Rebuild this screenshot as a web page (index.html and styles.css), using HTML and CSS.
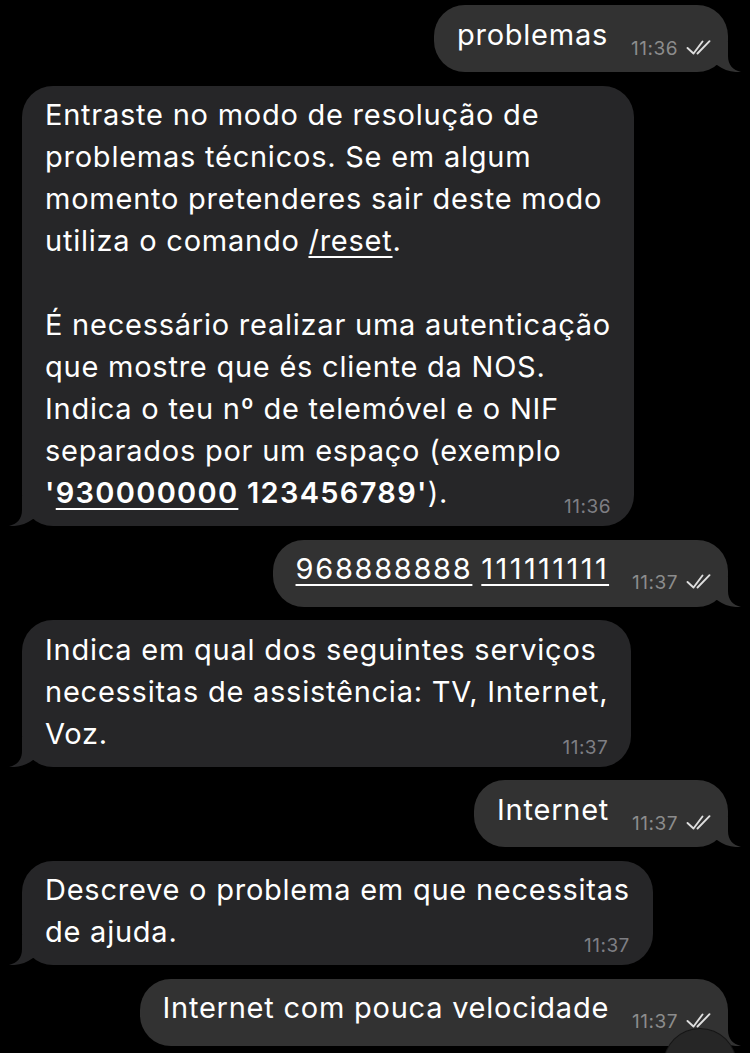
FILE: index.html
```html
<!DOCTYPE html>
<html lang="pt">
<head>
<meta charset="utf-8">
<title>Chat</title>
<link rel="stylesheet" href="styles.css">
</head>
<body>
<main class="chat">
  <div class="msg msg-out">
    <div class="bubble">problemas<span class="meta"><span class="time">11:36</span><svg class="checks" viewBox="0 0 26 15" width="26" height="15"><path d="M1.5 8 L7.5 13.5 L16.5 1.5"/><path d="M11.5 13.5 L23.5 1.2"/></svg></span><svg class="tail" viewBox="0 0 30 30" width="30" height="30"><path d="M14 0 V14 C14 23 9 28 1 30 C9 30.6 18 28.5 25 23 H30 V0 Z"/></svg></div>
  </div>

  <div class="msg msg-in">
    <div class="bubble">Entraste no modo de resolução de<br>problemas técnicos. Se em algum<br>momento pretenderes sair deste modo<br>utiliza o comando <span class="link">/reset</span>.<br><br>É necessário realizar uma autenticação<br>que mostre que és cliente da NOS.<br>Indica o teu nº de telemóvel e o NIF<br>separados por um espaço (exemplo<br><span class="b">'<span class="link">930000000</span> 123456789'</span>).<span class="meta"><span class="time">11:36</span></span><svg class="tail" viewBox="0 0 30 30" width="30" height="30"><path d="M14 0 V14 C14 23 9 28 1 30 C9 30.6 18 28.5 25 23 H30 V0 Z"/></svg></div>
  </div>

  <div class="msg msg-out">
    <div class="bubble"><span class="link num">968888888</span> <span class="link num ones">111111111</span><span class="meta"><span class="time">11:37</span><svg class="checks" viewBox="0 0 26 15" width="26" height="15"><path d="M1.5 8 L7.5 13.5 L16.5 1.5"/><path d="M11.5 13.5 L23.5 1.2"/></svg></span><svg class="tail" viewBox="0 0 30 30" width="30" height="30"><path d="M14 0 V14 C14 23 9 28 1 30 C9 30.6 18 28.5 25 23 H30 V0 Z"/></svg></div>
  </div>

  <div class="msg msg-in">
    <div class="bubble">Indica em qual dos seguintes serviços<br>necessitas de assistência: TV, Internet,<br>Voz.<span class="meta"><span class="time">11:37</span></span><svg class="tail" viewBox="0 0 30 30" width="30" height="30"><path d="M14 0 V14 C14 23 9 28 1 30 C9 30.6 18 28.5 25 23 H30 V0 Z"/></svg></div>
  </div>

  <div class="msg msg-out">
    <div class="bubble">Internet<span class="meta"><span class="time">11:37</span><svg class="checks" viewBox="0 0 26 15" width="26" height="15"><path d="M1.5 8 L7.5 13.5 L16.5 1.5"/><path d="M11.5 13.5 L23.5 1.2"/></svg></span><svg class="tail" viewBox="0 0 30 30" width="30" height="30"><path d="M14 0 V14 C14 23 9 28 1 30 C9 30.6 18 28.5 25 23 H30 V0 Z"/></svg></div>
  </div>

  <div class="msg msg-in">
    <div class="bubble">Descreve o problema em que necessitas<br>de ajuda.<span class="meta"><span class="time">11:37</span></span><svg class="tail" viewBox="0 0 30 30" width="30" height="30"><path d="M14 0 V14 C14 23 9 28 1 30 C9 30.6 18 28.5 25 23 H30 V0 Z"/></svg></div>
  </div>

  <div class="msg msg-out">
    <div class="bubble">Internet com pouca velocidade<span class="meta"><span class="time">11:37</span><svg class="checks" viewBox="0 0 26 15" width="26" height="15"><path d="M1.5 8 L7.5 13.5 L16.5 1.5"/><path d="M11.5 13.5 L23.5 1.2"/></svg></span><svg class="tail" viewBox="0 0 30 30" width="30" height="30"><path d="M14 0 V14 C14 23 9 28 1 30 C9 30.6 18 28.5 25 23 H30 V0 Z"/></svg></div>
  </div>
</main>
<div class="scroll-down"></div>
</body>
</html>
```

FILE: styles.css
```css
html, body {
  margin: 0;
  background: #000;
}

body {
  font-family: Inter, "Noto Sans", sans-serif;
  color: #fff;
  overflow: hidden;
  height: 1053px;
}

.chat {
  display: flex;
  flex-direction: column;
  gap: 13.5px;
  padding: 5px 22px 0;
}

.msg {
  display: flex;
}

.msg-out {
  justify-content: flex-end;
}

.msg-in {
  justify-content: flex-start;
}

.bubble {
  position: relative;
  border-radius: 31px;
  font-size: 29px;
  line-height: 42px;
  letter-spacing: 0.76px;
  white-space: nowrap;
  padding: 8.5px 23px 10px 23px;
}

.msg-in .bubble {
  background: #262628;
}

.msg-out .bubble {
  background: #323232;
  padding-right: 16px;
  padding-bottom: 14.5px;
}

.meta {
  float: right;
  display: flex;
  align-items: baseline;
  gap: 8px;
  margin: 25px 0 0 23px;
  font-size: 19px;
  line-height: 19px;
  letter-spacing: 0.5px;
}

.msg-in .time {
  color: #7e7e83;
}

.msg-out .time {
  color: #8c8c8c;
}

.checks {
  fill: none;
  stroke: #dedede;
  stroke-width: 1.9;
  stroke-linecap: round;
  stroke-linejoin: round;
}

.link {
  text-decoration: underline;
  text-decoration-thickness: 2px;
  text-underline-offset: 5px;
}

.num {
  letter-spacing: 1.7px;
}

.ones {
  letter-spacing: 2.4px;
}

.b {
  font-weight: 600;
  letter-spacing: 1.3px;
}

.tail {
  position: absolute;
  bottom: 0;
}

.msg-in .tail {
  left: -14px;
  fill: #262628;
}

.msg-out .tail {
  right: -14px;
  fill: #323232;
  transform: scaleX(-1);
}

.scroll-down {
  position: absolute;
  left: 664px;
  top: 1029px;
  width: 72px;
  height: 72px;
  border-radius: 50%;
  background: #262626;
  box-shadow: 0 0 0 1px #161616;
}
```
